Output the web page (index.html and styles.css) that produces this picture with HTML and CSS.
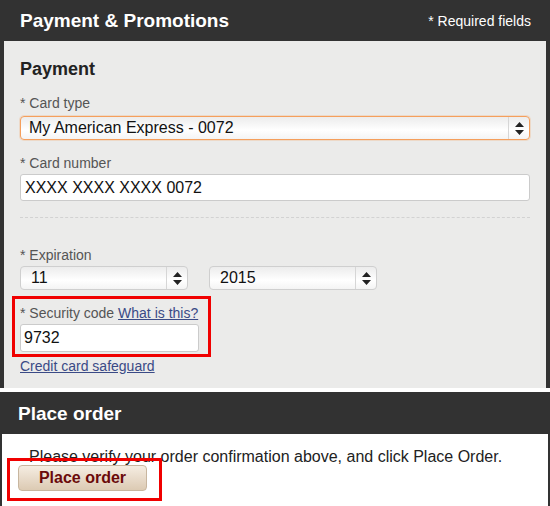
FILE: index.html
```html
<!DOCTYPE html>
<html lang="en">
<head>
    <meta charset="UTF-8">
    <meta name="viewport" content="width=device-width, initial-scale=1.0">
    <title>Checkout - Payment</title>
    <link rel="stylesheet" href="styles.css">
</head>
<body>
    <div class="panel">
        <div class="panel-header">
            <h2>Payment &amp; Promotions</h2>
            <span class="required-note">* Required fields</span>
        </div>
        <div class="panel-body payment-body">
            <h3>Payment</h3>

            <div class="form-group card-type">
                <label class="card-type-label">* Card type</label>
                <div class="select select-focus">
                    <span class="select-value">My American Express - 0072</span>
                    <span class="select-arrows">
                        <svg width="9" height="13" viewBox="0 0 9 13"><path d="M4.5 0 L9 5 L0 5 Z M0 8 L9 8 L4.5 13 Z" fill="#222"/></svg>
                    </span>
                </div>
            </div>

            <div class="form-group">
                <label>* Card number</label>
                <input type="text" class="text-input wide" value="XXXX XXXX XXXX 0072">
            </div>

            <hr class="divider">

            <div class="form-group expiration">
                <label>* Expiration</label>
                <div class="select-row">
                    <div class="select select-small">
                        <span class="select-value">11</span>
                        <span class="select-arrows">
                            <svg width="9" height="13" viewBox="0 0 9 13"><path d="M4.5 0 L9 5 L0 5 Z M0 8 L9 8 L4.5 13 Z" fill="#222"/></svg>
                        </span>
                    </div>
                    <div class="select select-small">
                        <span class="select-value">2015</span>
                        <span class="select-arrows">
                            <svg width="9" height="13" viewBox="0 0 9 13"><path d="M4.5 0 L9 5 L0 5 Z M0 8 L9 8 L4.5 13 Z" fill="#222"/></svg>
                        </span>
                    </div>
                </div>
            </div>

            <div class="highlight security">
                <label>* Security code <a href="#">What is this?</a></label>
                <input type="text" class="text-input short" value="9732">
            </div>
            <a href="#" class="safeguard">Credit card safeguard</a>
        </div>
    </div>

    <div class="panel order-panel">
        <div class="panel-header order-header">
            <h2>Place order</h2>
        </div>
        <div class="panel-body order-body">
            <p>Please verify your order confirmation above, and click Place Order.</p>
            <div class="highlight order-box">
                <button type="button" class="place-order-btn">Place order</button>
            </div>
        </div>
    </div>
</body>
</html>
```

FILE: styles.css
```css
/* Global Styles */
body {
    font-family: "Liberation Sans", Arial, sans-serif;
    margin: 0;
    padding: 0;
    background: #ffffff;
    color: #222;
}

/* Panels */
.panel-header {
    height: 41px;
    background-color: #323232;
    color: #fff;
    display: flex;
    justify-content: space-between;
    align-items: center;
    padding: 1px 19px 0 20px;
    box-sizing: border-box;
}

.panel-header h2 {
    margin: 0;
    font-size: 19px;
    font-weight: bold;
}

.required-note {
    font-size: 14px;
}

.payment-body {
    background-color: #ebebea;
    border-left: 4px solid #323232;
    border-right: 4px solid #323232;
    padding: 17px 16px 13px;
}

h3 {
    margin: 0 0 15px;
    font-size: 18px;
    line-height: 22px;
    color: #222;
}

label {
    display: block;
    font-size: 14px;
    line-height: 17px;
    color: #555;
    margin-bottom: 2px;
}

.card-type-label {
    margin-bottom: 4px;
}

.form-group {
    margin-bottom: 16px;
}

.card-type {
    margin-bottom: 15px;
}

/* Fake select boxes */
.select {
    display: flex;
    align-items: stretch;
    height: 24px;
    box-sizing: border-box;
    border: 1px solid #cfcfcf;
    border-radius: 4px;
    background: linear-gradient(#ececec, #ffffff 60%, #f4f4f4);
    font-size: 16px;
    color: #111;
}

.select-focus {
    border-color: #f59f5c;
    box-shadow: 0 0 0 1px rgba(245, 163, 100, 0.25);
}

.select-value {
    flex: 1;
    padding-left: 8px;
    line-height: 22px;
}

.select-arrows {
    width: 20px;
    border-left: 1px solid #d6d6d6;
    display: flex;
    align-items: center;
    justify-content: center;
}

.select-row {
    display: flex;
    gap: 21px;
}

.select-small {
    width: 168px;
}

.select-small .select-value {
    padding-left: 10px;
}

.expiration {
    margin-bottom: 6px;
}

/* Inputs */
.text-input {
    display: block;
    box-sizing: border-box;
    height: 27px;
    border: 1px solid #cbcbcb;
    border-radius: 3px;
    background: #fff;
    padding: 0 4px;
    font-family: "Liberation Sans", Arial, sans-serif;
    font-size: 16px;
    color: #111;
}

.wide {
    width: 100%;
}

.short {
    width: 179px;
    height: 28px;
    padding-left: 3px;
}

.divider {
    border: none;
    border-top: 1px dashed #d2d2d2;
    margin: 15px 0 29px;
}

a {
    color: #3a4a86;
}

/* Red annotation boxes */
.highlight {
    position: relative;
    border: 3px solid #f00000;
    box-sizing: border-box;
}

.security {
    width: 199px;
    margin-left: -8px;
    padding: 6px 5px 2px;
}

.safeguard {
    display: inline-block;
    margin-top: 1px;
    font-size: 14px;
    line-height: 17px;
}

/* Place order */
.order-panel {
    margin-top: 4px;
}

.order-header {
    height: 42px;
    padding-left: 18px;
}

.order-body {
    border-left: 2px solid #323232;
    border-right: 2px solid #323232;
    padding: 13px 0 10px 27px;
}

.order-body p {
    margin: 0;
    font-size: 16px;
    line-height: 19px;
    color: #222;
}

.order-box {
    width: 155px;
    height: 43px;
    margin: -8px 0 0 -22px;
    padding: 4px 8px;
}

.place-order-btn {
    width: 129px;
    height: 26px;
    border: 1px solid #c8b69f;
    border-radius: 4px;
    background: linear-gradient(#f5ede2, #dccab3);
    font-family: "Liberation Sans", Arial, sans-serif;
    font-size: 16px;
    font-weight: bold;
    color: #6b0a0a;
    padding: 0;
    cursor: pointer;
}
```
